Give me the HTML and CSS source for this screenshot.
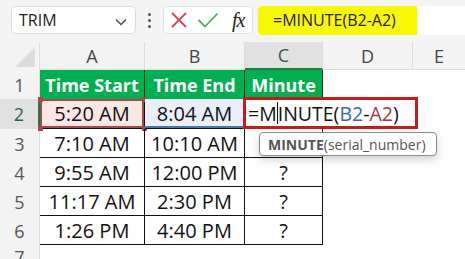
FILE: index.html
```html
<!DOCTYPE html>
<html lang="en">
    <head>
        <meta charset="UTF-8">
        <title>MINUTE</title>
        <link rel="stylesheet" href="styles.css">
    </head>
    <body>
        <div class="toolbar">
            <div class="namebox">
                <span>TRIM</span>
                <svg class="chev" width="12" height="8" viewBox="0 0 12 8"><path d="M1 1.5 L6 6.5 L11 1.5" fill="none" stroke="#444" stroke-width="1.3"/></svg>
            </div>
            <div class="dots"><i></i><i></i><i></i></div>
            <div class="controls">
                <svg width="18" height="18" viewBox="0 0 18 18"><path d="M2 2 L16 16 M16 2 L2 16" stroke="#e0474c" stroke-width="1.8"/></svg>
                <svg width="22" height="18" viewBox="0 0 22 18"><path d="M1.5 9 L8 15.5 L20.5 2.5" fill="none" stroke="#4caf6a" stroke-width="1.8"/></svg>
                <span class="fx">fx</span>
            </div>
            <div class="formulabar">
                <span class="mark">=MINUTE(B2-A2)</span>
            </div>
        </div>

        <div class="sheet">
            <div class="corner"><b></b></div>
            <div class="colhead">A</div>
            <div class="colhead">B</div>
            <div class="colhead sel">C</div>
            <div class="colhead">D</div>
            <div class="colhead last">E</div>

            <div class="rowhead">1</div>
            <div class="cell head">Time Start</div>
            <div class="cell head">Time End</div>
            <div class="cell head">Minute</div>
            <div class="cell"></div>
            <div class="cell"></div>

            <div class="rowhead sel">2</div>
            <div class="cell t ref-a">5:20 AM<i class="h tl"></i><i class="h tr"></i><i class="h bl"></i><i class="h br"></i></div>
            <div class="cell t ref-b">8:04 AM</div>
            <div class="cell t edit">
                <div class="editbox">=M<span class="caret"></span>INUTE(<span class="rb">B2</span>-<span class="ra">A2</span>)</div>
                <div class="tip"><b>MINUTE</b>(serial_number)</div>
            </div>
            <div class="cell"></div>
            <div class="cell"></div>

            <div class="rowhead">3</div>
            <div class="cell t">7:10 AM</div>
            <div class="cell t">10:10 AM</div>
            <div class="cell t"></div>
            <div class="cell"></div>
            <div class="cell"></div>

            <div class="rowhead">4</div>
            <div class="cell t">9:55 AM</div>
            <div class="cell t">12:00 PM</div>
            <div class="cell t">?</div>
            <div class="cell"></div>
            <div class="cell"></div>

            <div class="rowhead">5</div>
            <div class="cell t">11:17 AM</div>
            <div class="cell t">2:30 PM</div>
            <div class="cell t">?</div>
            <div class="cell"></div>
            <div class="cell"></div>

            <div class="rowhead">6</div>
            <div class="cell t">1:26 PM</div>
            <div class="cell t">4:40 PM</div>
            <div class="cell t">?</div>
            <div class="cell"></div>
            <div class="cell"></div>

            <div class="rowhead">7</div>
            <div class="cell"></div>
            <div class="cell"></div>
            <div class="cell"></div>
            <div class="cell"></div>
            <div class="cell"></div>
        </div>
    </body>
</html>
```

FILE: styles.css
```css
body {
    margin: 0;
    padding: 0;
    width: 465px;
    height: 259px;
    overflow: hidden;
    background-color: #fff;
    font-family: "Open Sans", sans-serif;
}

/* barre du haut */

.toolbar {
    display: flex;
    align-items: center;
    height: 42px;
    background-color: #f4f4f4;
    padding-left: 11px;
    box-sizing: border-box;
    padding-bottom: 2px;
}

.namebox {
    width: 125px;
    height: 28px;
    box-sizing: border-box;
    background-color: #fff;
    border: 1px solid #dadada;
    border-radius: 5px;
    display: flex;
    align-items: center;
    justify-content: space-between;
    padding: 0 8px 0 7px;
    font-size: 16px;
    color: #222;
}

.chev {
    margin-top: 3px;
}

.dots {
    width: 27px;
    display: flex;
    flex-direction: column;
    align-items: center;
    gap: 3px;
}

.dots i {
    width: 3px;
    height: 3px;
    background-color: #555;
    border-radius: 50%;
}

.controls {
    width: 90px;
    height: 28px;
    box-sizing: border-box;
    background-color: #fff;
    border: 1px solid #e2e2e2;
    border-radius: 5px;
    display: flex;
    align-items: center;
    gap: 9px;
    padding-left: 6px;
}

.fx {
    font-family: "Liberation Serif", serif;
    font-style: italic;
    font-size: 20px;
    color: #222;
    margin-left: 4px;
    letter-spacing: -1px;
}

.formulabar {
    flex: 1;
    height: 29px;
    margin-left: 5px;
    background-color: #fff;
    display: flex;
}

.mark {
    width: 159px;
    box-sizing: border-box;
    background-color: #f8f800;
    border-radius: 4px 0 0 4px;
    padding-left: 15px;
    font-size: 16px;
    line-height: 29px;
    color: #222;
}

/* feuille */

.sheet {
    display: grid;
    grid-template-columns: 40px 105px 100px 78px 90px 1fr;
    grid-template-rows: 28px 29px 30px 29px 29px 29px 29px 1fr;
    height: 217px;
}

.corner {
    background-color: #f3f3f3;
    border-right: 1px solid #e0e0e0;
    position: relative;
}

.corner b {
    position: absolute;
    right: 4px;
    bottom: 3px;
    width: 0;
    height: 0;
    border-left: 20px solid transparent;
    border-bottom: 20px solid #dcdcdc;
}

.colhead {
    background-color: #f3f3f3;
    border-right: 1px solid #dcdcdc;
    border-bottom: 1px solid #dcdcdc;
    display: flex;
    align-items: center;
    justify-content: center;
    font-size: 18px;
    color: #444;
}

.colhead.last {
    border-right: none;
}

.colhead.sel {
    background-color: #e1e1e1;
    color: #2f5e45;
    border-bottom: 2px solid #1d7a45;
}

.rowhead {
    background-color: #f3f3f3;
    border-right: 1px solid #dcdcdc;
    display: flex;
    align-items: center;
    justify-content: center;
    font-size: 18px;
    color: #555;
}

.rowhead.sel {
    background-color: #e1e1e1;
    color: #2f5e45;
    border-right: 2px solid #1d7a45;
}

.cell {
    display: flex;
    align-items: center;
    justify-content: center;
    font-size: 20px;
    color: #111;
    position: relative;
}

.cell.head {
    background-color: #00b050;
    color: #fff;
    font-weight: bold;
    font-size: 18px;
    border-right: 1px solid #0a3a1e;
}

.cell.t {
    border-right: 1px solid #111;
    border-bottom: 1px solid #111;
}

.ref-a {
    background-color: #fbe6e6;
    box-shadow: inset 0 0 0 2px #a5484a;
}

.ref-b {
    background-color: #e9eef8;
    box-shadow: inset 0 -2px 0 #4a72b8;
}

.h {
    position: absolute;
    width: 5px;
    height: 5px;
    background-color: #a5484a;
}

.tl { left: -2px; top: -2px; }
.tr { right: -3px; top: -2px; }
.bl { left: -2px; bottom: -3px; }
.br { right: -3px; bottom: -3px; }

.edit {
    justify-content: flex-start;
    z-index: 2;
}

.editbox {
    position: absolute;
    left: -2px;
    top: -2px;
    width: 175px;
    height: 32px;
    box-sizing: border-box;
    border: 3px solid #c81a1a;
    background-color: #fff;
    font-size: 19.5px;
    padding-left: 2px;
    display: flex;
    align-items: center;
    white-space: nowrap;
    color: #111;
}

.caret {
    display: inline-block;
    width: 1px;
    height: 22px;
    background-color: #111;
}

.rb {
    color: #3b67b3;
}

.ra {
    color: #a3373a;
}

.tip {
    position: absolute;
    left: 14px;
    top: 33px;
    width: 178px;
    height: 24px;
    box-sizing: border-box;
    background-color: #fff;
    border: 1px solid #8a8a8a;
    border-radius: 4px;
    box-shadow: 0 4px 8px rgba(0, 0, 0, 0.18);
    font-size: 14px;
    color: #555;
    display: flex;
    align-items: center;
    padding-left: 8px;
    white-space: nowrap;
}

.tip b {
    color: #555;
}
```
